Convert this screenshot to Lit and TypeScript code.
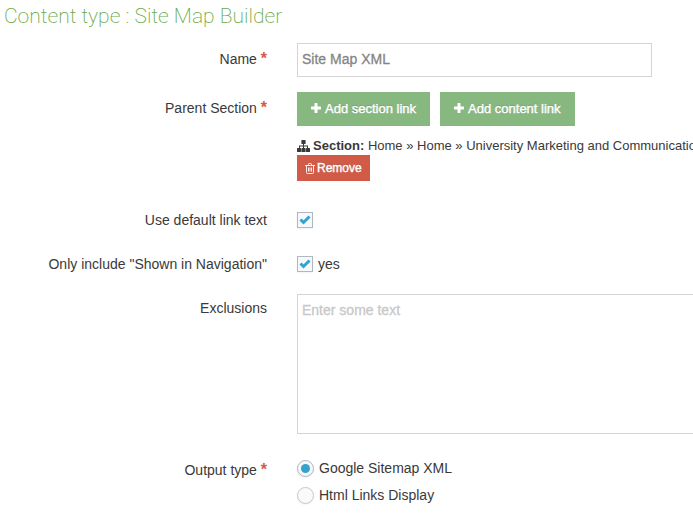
import { LitElement, html, css, svg } from "lit";
import { customElement, property } from "lit/decorators.js";

const plusIcon = html`<svg class="plus" width="10" height="10" viewBox="0 0 10 10" aria-hidden="true">
  <path d="M4 0h2q.5 0 .5.5v3h3q.5 0 .5.5v2q0 .5-.5.5h-3v3q0 .5-.5.5H4q-.5 0-.5-.5v-3h-3Q0 6.500 0 6V4q0-.5.5-.5h3v-3Q3.500 0 4 0z" fill="currentColor"/>
</svg>`;

const sitemapIcon = html`<svg class="sitemap" width="13" height="12" viewBox="0 0 13 12" aria-hidden="true">
  <path d="M5 0h3q.6 0 .6.600v2.800q0 .6-.6.600H7v1.500h4V8h1.400q.6 0 .6.600v2.800q0 .6-.6.600h-2.800q-.6 0-.6-.6V8.600q0-.6.6-.6H10V6.500H7V8h1q.6 0 .6.600v2.800q0 .6-.6.600H5q-.6 0-.6-.6V8.600Q4.400 8 5 8h1V6.500H3V8h.4q.6 0 .6.600v2.800q0 .6-.6.600H.6q-.6 0-.6-.6V8.600Q0 8 .6 8H2V5.500h4V4H5q-.6 0-.6-.6V.6Q4.400 0 5 0z" fill="currentColor"/>
</svg>`;

const trashIcon = html`<svg class="trash" width="10" height="11" viewBox="0 0 10 11" aria-hidden="true">
  <path d="M0 2.500h10M3.500 2.300V1.200q0-.7.700-.7h1.600q.7 0 .7.700v1.100M1.500 2.500v7q0 1 1 1h5q1 0 1-1v-7M3.500 4.500v4M5 4.500v4M6.500 4.500v4" fill="none" stroke="currentColor" stroke-width=".9"/>
</svg>`;

const tick = svg`<path d="M1.500 4.500l3 3 6-6" fill="none" stroke="#32a3ce" stroke-width="3"/>`;

@customElement("form-row")
class FormRow extends LitElement {
  @property() label = "";
  @property({ type: Boolean }) required = false;

  static styles = css`
    :host {
      display: grid;
      grid-template-columns: 267px minmax(0, 1fr);
      column-gap: 30px;
      align-items: start;
    }
    .label {
      padding-top: 6px;
      line-height: 20px;
      text-align: right;
    }
    :host(.snug) .label {
      padding-top: 0;
    }
    :host(.area) .label {
      padding-top: 4px;
    }
    .star {
      color: #d15b47;
      font-size: 16px;
      font-weight: bold;
      line-height: 16px;
    }
  `;

  render() {
    return html`
      <div class="label">${this.label}${this.required ? html` <span class="star">*</span>` : ""}</div>
      <slot></slot>
    `;
  }
}

@customElement("app-root")
class AppRoot extends LitElement {
  static styles = css`
    :host {
      display: block;
      overflow: hidden;
      background: #fff;
      color: #393939;
      font: 14px/20px "Helvetica Neue", "Liberation Sans", sans-serif;
    }
    * {
      box-sizing: border-box;
    }
    h1 {
      margin: 0 0 11px 4px;
      color: #69aa46;
      font: 200 21px/32px Roboto, "Liberation Sans", sans-serif;
      white-space: nowrap;
    }
    form {
      display: flex;
      flex-direction: column;
    }
    .name {
      width: 355px;
      max-width: 100%;
      height: 34px;
      padding: 4px 4px 6px;
      border: 1px solid #d5d5d5;
      color: #858585;
      font: inherit;
      outline: 0;
      -webkit-text-stroke: 0.3px currentColor;
    }
    .parent {
      margin-top: 15px;
    }
    .buttons {
      display: flex;
      gap: 10px;
    }
    button {
      display: inline-flex;
      align-items: center;
      justify-content: center;
      border: 0;
      color: #fff;
      font-family: inherit;
      text-shadow: 0 -1px 0 rgba(0, 0, 0, 0.25);
      white-space: nowrap;
      -webkit-text-stroke: 0.4px currentColor;
    }
    .add {
      height: 34px;
      gap: 4px;
      padding: 0 14px 2px;
      background: #87b87f;
      font-size: 13px;
    }
    .remove {
      height: 26px;
      gap: 2px;
      padding: 0 8px;
      background: #d15b47;
      font-size: 12px;
    }
    .crumbs {
      display: flex;
      align-items: center;
      gap: 3px;
      margin-top: 10px;
      font-size: 13px;
      line-height: 19px;
      white-space: nowrap;
    }
    svg {
      flex: none;
    }
    .default {
      margin-top: 29px;
    }
    .nav {
      margin-top: 24px;
    }
    .choice {
      display: flex;
      align-items: center;
      gap: 5px;
      min-height: 20px;
    }
    .box {
      display: grid;
      place-items: center;
    }
    .box > * {
      grid-area: 1 / 1;
    }
    .box svg {
      pointer-events: none;
    }
    input:not(:checked) + svg {
      visibility: hidden;
    }
    input[type="checkbox"],
    input[type="radio"] {
      appearance: none;
      margin: 0;
      border: 1px solid #adb8c0;
      background: #f5f8fc;
      box-shadow: 0 1px 2px rgba(0, 0, 0, 0.05);
    }
    input[type="checkbox"] {
      width: 16px;
      height: 16px;
    }
    input[type="radio"] {
      width: 17px;
      height: 17px;
      border-color: #c8c8c8;
      border-radius: 50%;
      background: #fafafa;
    }
    input[type="radio"]:checked {
      border-color: #adb8c0;
      background: #f5f8fc;
    }
    .exclusions {
      margin-top: 20px;
    }
    textarea {
      display: block;
      width: calc(100% + 10px);
      height: 140px;
      padding: 5px 4px;
      border: 1px solid #d5d5d5;
      background: #fff;
      color: #858585;
      font: inherit;
      resize: none;
      outline: 0;
    }
    textarea::placeholder {
      color: #c8c8c8;
      -webkit-text-stroke: 0.3px currentColor;
    }
    .output {
      margin-top: 20px;
    }
    .radios {
      display: flex;
      flex-direction: column;
      gap: 7px;
      padding-top: 4px;
    }
  `;

  render() {
    return html`
      <h1>Content type : Site Map Builder</h1>
      <form @submit=${(e: Event) => e.preventDefault()}>
        <form-row label="Name" required>
          <input class="name" type="text" aria-label="Name" required .value=${"Site Map XML"} />
        </form-row>
        <form-row class="parent" label="Parent Section" required>
          <div>
            <div class="buttons">
              <button class="add" type="button">${plusIcon}Add section link</button>
              <button class="add" type="button">${plusIcon}Add content link</button>
            </div>
            <div class="crumbs">
              ${sitemapIcon}
              <span><b>Section:</b> Home » Home » University Marketing and Communications</span>
            </div>
            <button class="remove" type="button">${trashIcon}Remove</button>
          </div>
        </form-row>
        <form-row class="default snug" label="Use default link text">
          <label class="choice">${this.checkbox("Use default link text")}</label>
        </form-row>
        <form-row class="nav snug" label='Only include "Shown in Navigation"'>
          <label class="choice">${this.checkbox('Only include "Shown in Navigation": yes')}<span>yes</span></label>
        </form-row>
        <form-row class="exclusions area" label="Exclusions">
          <textarea aria-label="Exclusions" placeholder="Enter some text"></textarea>
        </form-row>
        <form-row class="output" label="Output type" required>
          <div class="radios" role="radiogroup" aria-label="Output type">
            ${this.radio("Google Sitemap XML", true)} ${this.radio("Html Links Display", false)}
          </div>
        </form-row>
      </form>
    `;
  }

  private checkbox(name: string) {
    return html`<span class="box">
      <input type="checkbox" aria-label=${name} checked />
      <svg width="12" height="10" viewBox="0 0 12 10" aria-hidden="true">${tick}</svg>
    </span>`;
  }

  private radio(text: string, checked: boolean) {
    return html`<label class="choice">
      <span class="box">
        <input type="radio" name="output" ?checked=${checked} />
        <svg width="9" height="9" viewBox="0 0 9 9" aria-hidden="true"><circle cx="4.500" cy="4.500" r="4.500" fill="#32a3ce" /></svg>
      </span>
      <span>${text}</span>
    </label>`;
  }
}
